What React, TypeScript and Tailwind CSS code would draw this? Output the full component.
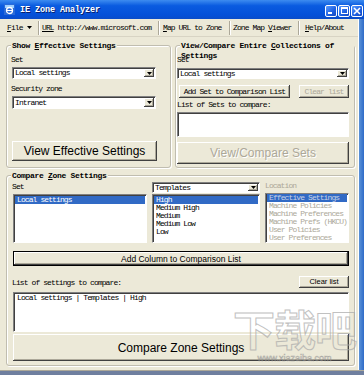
import type { ReactNode } from 'react';

const mono = "font-['Liberation_Mono','DejaVu_Sans_Mono',monospace] text-[8px] tracking-[-0.9px] leading-[10px]";
const sans = "font-['Liberation_Sans',Arial,sans-serif] tracking-normal";
const raised = 'bg-[#ece9d8] shadow-[inset_-1px_-1px_#404040,inset_1px_1px_#ffffff,inset_-2px_-2px_#aca899]';
const sunken = 'bg-white border border-t-[#808080] border-l-[#808080] border-r-white border-b-white shadow-[inset_1px_1px_#404040]';

function Arrow() {
  return (
    <svg width="5" height="3" viewBox="0 0 5 3">
      <path d="M0 0h5L2.5 3z" fill="#000" />
    </svg>
  );
}

function Combo({ text, className = '' }: { text: string; className?: string }) {
  return (
    <div className={`flex ${sunken} ${className}`}>
      <span className="flex-1 self-center pl-[2px] whitespace-nowrap">{text}</span>
      <span className={`w-[10px] my-[1px] mr-[1px] flex items-center justify-center ${raised}`}>
        <Arrow />
      </span>
    </div>
  );
}

function Group({ title, titleClass = '', className = '', children }: { title: ReactNode; titleClass?: string; className?: string; children: ReactNode }) {
  return (
    <div className={`flex flex-col border border-[#c0bdb0] rounded-[3px] shadow-[1px_1px_0_#ffffff,inset_1px_1px_0_#ffffff] ${className}`}>
      <div className={`-mt-[5px] ml-[4px] w-fit px-[1px] bg-[#ece9d8] font-bold tracking-[-0.3px] ${titleClass}`}>{title}</div>
      {children}
    </div>
  );
}

function Sep() {
  return <div className="w-[2px] h-[14px] border-l border-l-[#aca899] border-r border-r-white" />;
}

function TitleBtn({ children }: { children: ReactNode }) {
  return (
    <div className="w-[12px] h-[12px] rounded-[2px] border border-white flex items-center justify-center bg-[linear-gradient(135deg,#5a9bff,#1d5fe0_60%,#1548c0)]">
      {children}
    </div>
  );
}

function TitleBar() {
  return (
    <div className="h-[19px] flex items-center pl-[4px] pr-[1px] bg-[linear-gradient(to_bottom,#3d8cf0,#0a5be0_30%,#0450d8_80%,#0a4cc8)]">
      <svg width="11" height="11" viewBox="0 0 11 11">
        <rect x="0" y="0" width="11" height="11" fill="#2a6ad8" />
        <rect x="1" y="1" width="9" height="3" fill="#9fd0ff" />
        <circle cx="5.5" cy="6.5" r="3" fill="none" stroke="#ffffff" strokeWidth="1.3" />
        <rect x="2.5" y="6" width="6" height="1" fill="#ffffff" />
      </svg>
      <span className="ml-[5px] text-white font-bold text-[8.5px] tracking-[-0.1px] [text-shadow:1px_1px_#0a1e6a] whitespace-nowrap">IE Zone Analyzer</span>
      <div className="ml-auto mt-[2px] flex gap-[1px]">
        <TitleBtn>
          <div className="w-[4px] h-[2px] bg-white mt-[5px] -ml-[2px]" />
        </TitleBtn>
        <TitleBtn>
          <div className="w-[7px] h-[7px] border border-white border-t-2" />
        </TitleBtn>
        <TitleBtn>
          <svg width="8" height="8" viewBox="0 0 8 8">
            <path d="M1 1l6 6M7 1l-6 6" stroke="#fff" strokeWidth="1.6" />
          </svg>
        </TitleBtn>
      </div>
    </div>
  );
}

function Toolbar() {
  return (
    <div className="h-[18px] flex items-center whitespace-nowrap border-b border-b-[#d8d4c4]">
      <div className="w-[38px] pl-[7px] flex items-center">
        <u>F</u>ile
        <span className="ml-[4px] flex">
          <Arrow />
        </span>
      </div>
      <Sep />
      <div className="w-[118px] pl-[2px]">
        <u>URL</u> http://www.microsoft.com
      </div>
      <Sep />
      <div className="w-[69px] pl-[3px]">
        <u>M</u>ap URL to Zone
      </div>
      <Sep />
      <div className="w-[67px] pl-[2px]">
        Zone Map <u>V</u>iewer
      </div>
      <Sep />
      <div className="pl-[5px]">
        <u>H</u>elp/About
      </div>
    </div>
  );
}

function Row({ text, sel, disabled }: { text: string; sel?: boolean; disabled?: boolean }) {
  let cls = 'text-black';
  if (sel) cls = disabled ? 'bg-[#316ac5] text-[#c8d2e6]' : 'bg-[#316ac5] text-white';
  else if (disabled) cls = 'text-[#aca899]';
  return <div className={`h-[8px] leading-[8px] pl-[2px] whitespace-nowrap ${cls}`}>{text}</div>;
}

export default function App() {
  return (
    <div className={`relative w-[364px] h-[375px] overflow-hidden bg-[#ece9d8] text-black ${mono}`}>
      <TitleBar />
      <div className="flex h-[351px]">
        <div className="w-[358px] flex flex-col">
          <Toolbar />

          {/* top two groups */}
          <div className="mt-[8px] ml-[6px] flex gap-[4px]">
            <Group
              className="w-[165px] h-[123px]"
              title={
                <>
                  Show <u>E</u>ffective Settings
                </>
              }
            >
              <div className="mt-[4px] pl-[4px]">Set</div>
              <Combo text="Local settings" className="mt-[2px] ml-[5px] w-[144px] h-[12px]" />
              <div className="mt-[5px] pl-[4px]">Security zone</div>
              <Combo text="Intranet" className="mt-[2px] ml-[5px] w-[144px] h-[13px]" />
              <button className={`mt-[32px] ml-[5px] w-[145px] h-[20px] text-[12px] ${sans} ${raised}`}>View Effective Settings</button>
            </Group>

            <Group
              className="w-[180px] h-[123px]"
              titleClass="w-[158px] h-[10px]"
              title={
                <>
                  View/Compare Entire <u>C</u>ollections of Settings
                </>
              }
            >
              <div className="mt-[4px] pl-[1px]">Set</div>
              <Combo text="Local settings" className="mt-[3px] ml-[1px] w-[172px] h-[11px]" />
              <div className="mt-[6px] flex">
                <button className={`ml-[3px] w-[111px] h-[13px] ${raised}`}>Add Set to Comparison List</button>
                <button className={`ml-[9px] w-[50px] h-[13px] text-[#aca899] ${raised}`}>Clear list</button>
              </div>
              <div className="mt-[2px] pl-[1px]">List of Sets to compare:</div>
              <div className={`mt-[2px] ml-[1px] w-[172px] h-[25px] ${sunken}`} />
              <button className={`mt-[5px] ml-[1px] w-[172px] h-[22px] text-[12px] text-[#aca899] [text-shadow:1px_1px_#ffffff] ${sans} ${raised}`}>View/Compare Sets</button>
            </Group>
          </div>

          {/* compare zone settings */}
          <Group
            className="mt-[7px] ml-[6px] w-[349px] h-[191px]"
            title={
              <>
                Compare <u>Z</u>one Settings
              </>
            }
          >
            <div className="ml-[6px] flex gap-[5px]">
              <div className="w-[134px] mt-[1px] flex flex-col">
                <div className="-ml-[1px]">Set</div>
                <div className={`mt-[2px] h-[49px] pt-[1px] px-[1px] ${sunken}`}>
                  <Row text="Local settings" sel />
                </div>
              </div>
              <div className="w-[108px] mt-[1px] flex flex-col">
                <Combo text="Templates" className="h-[11px]" />
                <div className={`mt-[1px] h-[49px] pt-[1px] px-[1px] ${sunken}`}>
                  <Row text="High" sel />
                  <Row text="Medium High" />
                  <Row text="Medium" />
                  <Row text="Medium Low" />
                  <Row text="Low" />
                </div>
              </div>
              <div className="w-[84px] flex flex-col">
                <div className="text-[#aca899]">Location</div>
                <div className={`mt-[2px] h-[50px] px-[1px] overflow-hidden ${sunken}`}>
                  <Row text="Effective Settings" sel disabled />
                  <Row text="Machine Policies" disabled />
                  <Row text="Machine Preferences" disabled />
                  <Row text="Machine Prefs (HKCU)" disabled />
                  <Row text="User Policies" disabled />
                  <Row text="User Preferences" disabled />
                </div>
              </div>
            </div>

            <button className={`mt-[8px] ml-[6px] w-[336px] h-[15px] text-[8.5px] border border-black ${sans} ${raised}`}>Add Column to Comparison List</button>

            <div className="mt-[10px] ml-[5px] w-[337px] h-[12px] flex items-end justify-between">
              <span className="leading-[10px]">List of settings to compare:</span>
              <button className={`w-[50px] h-[12px] text-[7.5px] ${sans} ${raised}`}>Clear list</button>
            </div>

            <div className={`mt-[4px] ml-[6px] w-[336px] h-[40px] pt-[1px] px-[1px] ${sunken}`}>
              <Row text="Local settings | Templates | High" />
            </div>

            <button className={`mt-[2px] ml-[6px] w-[336px] h-[27px] text-[12px] ${sans} ${raised}`}>Compare Zone Settings</button>
          </Group>
        </div>
        <div className="w-[6px] border-l border-l-white bg-[linear-gradient(to_right,#5c93d8,#2f6bc8)]" />
      </div>
      <div className="h-[5px] border-t border-t-[#aca899] bg-[#6f7f9f]" />

      {/* watermark overlay */}
      <div className="absolute left-[233px] top-[303px] pointer-events-none flex flex-col items-center opacity-70">
        <span className="font-['Noto_Sans_CJK_SC',sans-serif] text-[42px] leading-[50px] font-bold tracking-[-1px] text-transparent [-webkit-text-stroke:1px_#a8a8a8]">下载吧</span>
        <span className={`text-[9px] leading-[10px] text-transparent [-webkit-text-stroke:0.5px_#909090] ${sans}`}>www.xiazaiba.com</span>
      </div>
    </div>
  );
}
